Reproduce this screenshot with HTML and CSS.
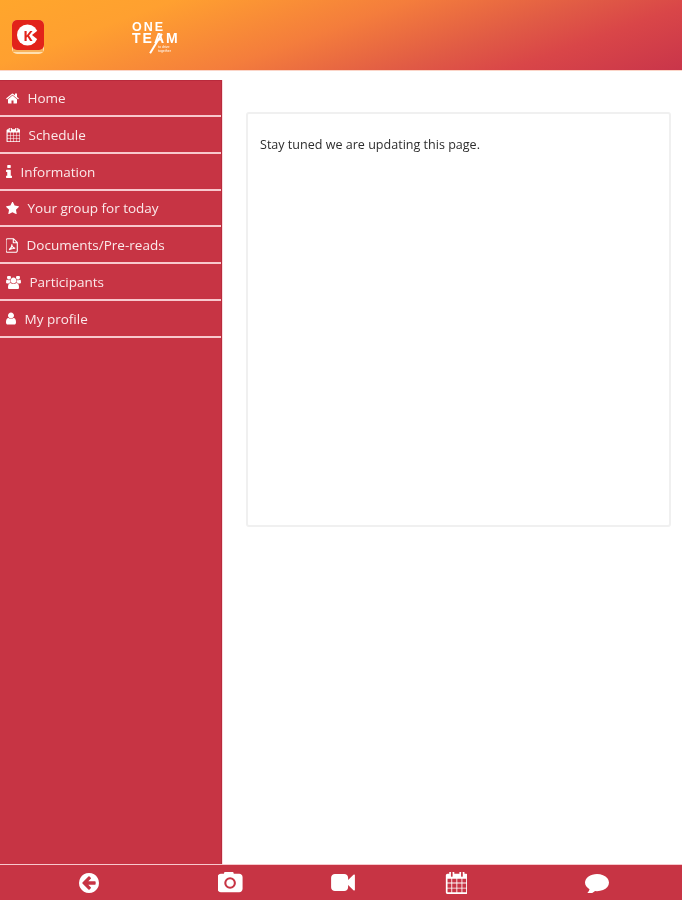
FILE: index.html
```html
<!DOCTYPE html>
<html lang="en">
<head>
<meta charset="utf-8">
<title>One Team</title>
<link rel="stylesheet" href="styles.css">
</head>
<body>
<div class="app">
  <header class="topbar">
    <svg class="brand-logo" viewBox="0 0 32 34" aria-hidden="true">
      <rect x="0" y="0" width="32" height="34" rx="5" fill="#ffe0b0"/>
      <rect x="1" y="25" width="30" height="7" fill="#f7b25a"/>
      <rect x="0" y="0" width="32" height="30" rx="5" fill="#e2231a"/>
      <circle cx="15.500" cy="15" r="10.500" fill="#fff"/>
      <path d="M20 15 L27.500 9 V21 Z" fill="#e2231a"/>
      <text x="16" y="20.500" class="brand-k">K</text>
    </svg>
    <div class="team-logo">
      <span class="team-one">ONE</span>
      <span class="team-team">TEAM</span>
      <i class="team-slash"></i>
      <span class="team-small">to drive<br>together</span>
    </div>
  </header>
  <div class="body-row">
    <nav class="sidebar">
      <a class="nav-item"><svg class="ico w13" viewBox="64 200 1664 1400"><path d="M1472 992v480q0 26-19 45t-45 19h-384v-384h-256v384h-384q-26 0-45-19t-19-45v-480q0-1 .5-3t.5-3l575-474 575 474q1 2 1 6zm223-69l-62 74q-8 9-21 11h-3q-13 0-21-7l-692-577-692 577q-12 8-24 7-13-2-21-11l-62-74q-8-10-7-23.500t11-21.500l719-599q32-26 76-26t76 26l244 204v-195q0-14 9-23t23-9h192q14 0 23 9t9 23v408l219 182q10 8 11 21.500t-7 23.500z"/></svg>Home</a>
      <a class="nav-item"><svg class="ico w14" viewBox="0 100 1664 1664"><path d="M192 1664h288v-288h-288v288zm352 0h320v-288h-320v288zm-352-352h288v-320h-288v320zm352 0h320v-320h-320v320zm-352-384h288v-288h-288v288zm736 736h320v-288h-320v288zm-384-736h320v-288h-320v288zm768 736h288v-288h-288v288zm-384-352h320v-320h-320v320zm-352-864v-288q0-13-9.500-22.500t-22.500-9.500h-64q-13 0-22.500 9.500t-9.500 22.500v288q0 13 9.500 22.500t22.500 9.500h64q13 0 22.500-9.500t9.500-22.500zm736 864h288v-320h-288v320zm-384-384h320v-288h-320v288zm384 0h288v-288h-288v288zm32-480v-288q0-13-9.500-22.500t-22.500-9.500h-64q-13 0-22.500 9.500t-9.500 22.500v288q0 13 9.500 22.500t22.500 9.500h64q13 0 22.500-9.500t9.500-22.500zm384-64v1280q0 52-38 90t-90 38h-1408q-52 0-90-38t-38-90v-1280q0-52 38-90t90-38h128v-96q0-66 47-113t113-47h64q66 0 113 47t47 113v96h384v-96q0-66 47-113t113-47h64q66 0 113 47t47 113v96h128q52 0 90 38t38 90z"/></svg>Schedule</a>
      <a class="nav-item"><svg class="ico w6" viewBox="576 128 640 1408"><path d="M1216 1344v128q0 26-19 45t-45 19h-512q-26 0-45-19t-19-45v-128q0-26 19-45t45-19h64v-384h-64q-26 0-45-19t-19-45v-128q0-26 19-45t45-19h384q26 0 45 19t19 45v576h64q26 0 45 19t19 45zm-128-1152v192q0 26-19 45t-45 19h-256q-26 0-45-19t-19-45v-192q0-26 19-45t45-19h256q26 0 45 19t19 45z"/></svg>Information</a>
      <a class="nav-item"><svg class="ico w13" viewBox="64 150 1664 1500"><path d="M1728 647q0 22-26 48l-363 354 86 500q1 7 1 20 0 21-10.500 35.500t-30.500 14.500q-19 0-40-12l-449-236-449 236q-22 12-40 12-21 0-31.500-14.500t-10.500-35.500q0-6 2-20l86-500-364-354q-25-27-25-48 0-37 56-46l502-73 225-455q19-41 49-41t49 41l225 455 502 73q56 9 56 46z"/></svg>Your group for today</a>
      <a class="nav-item"><svg class="ico w12" viewBox="0 0 12 15"><path class="ico-line" d="M1.500.7h6l3.800 3.800v8.300a1.500 1.500 0 0 1-1.500 1.500h-8.300a1.500 1.500 0 0 1-1.500-1.500v-10.600a1.500 1.500 0 0 1 1.500-1.500zM7.300.9v3.800h3.800M3 11.800c2-1.200 3-3.800 2.800-5.500 0 2 1.200 3.600 3.400 3.900-2.400 0-4.400.5-6.200 1.600z"/></svg>Documents/Pre-reads</a>
      <a class="nav-item"><svg class="ico w15" viewBox="0 128 1920 1536"><path d="M593 896q-162 5-265 128h-134q-82 0-138-40.500t-56-118.500q0-353 124-353 6 0 43.500 21t97.500 42.500 119 21.500q67 0 133-23-5 37-5 66 0 139 81 256zm1071 637q0 120-73 189.500t-194 69.500h-874q-121 0-194-69.500t-73-189.500q0-53 3.500-103.500t14-109 26.500-108.500 43-97.500 62-81 85.500-53.500 111.500-20q10 0 43 21.500t73 48 107 48 135 21.500 135-21.500 107-48 73-48 43-21.500q61 0 111.500 20t85.500 53.500 62 81 43 97.500 26.500 108.500 14 109 3.500 103.500zm-1024-1277q0 106-75 181t-181 75-181-75-75-181 75-181 181-75 181 75 75 181zm704 384q0 159-112.500 271.500t-271.500 112.500-271.500-112.500-112.500-271.500 112.500-271.500 271.500-112.500 271.500 112.500 112.500 271.500zm576 225q0 78-56 118.500t-138 40.500h-134q-103-123-265-128 81-117 81-256 0-29-5-66 66 23 133 23 59 0 119-21.500t97.500-42.500 43.500-21q124 0 124 353zm-128-609q0 106-75 181t-181 75-181-75-75-181 75-181 181-75 181 75 75 181z"/></svg>Participants</a>
      <a class="nav-item"><svg class="ico w10" viewBox="256 128 1280 1536"><path d="M1536 1399q0 109-62.500 187t-150.500 78h-854q-88 0-150.500-78t-62.500-187q0-85 8.500-160.500t31.500-152 58.500-131 94-89 134.500-34.500q131 128 313 128t313-128q76 0 134.500 34.500t94 89 58.500 131 31.500 152 8.500 160.500zm-256-887q0 159-112.500 271.500t-271.500 112.500-271.500-112.500-112.500-271.500 112.500-271.500 271.500-112.500 271.500 112.500 112.500 271.500z"/></svg>My profile</a>
    </nav>
    <main class="content">
      <section class="card">
        <p class="card-text">Stay tuned we are updating this page.</p>
      </section>
    </main>
  </div>
  <footer class="bottombar">
    <a class="tab"><svg class="tab-ico" viewBox="128 128 1536 1536"><path d="M1408 960v-128q0-26-18.500-45t-45.500-19h-502l189-189q19-19 19-45t-19-45l-91-91q-18-18-45-18t-45 18l-362 362-91 91q-18 18-18 45t18 45l91 91 362 362q18 18 45 18t45-18l91-91q18-18 18-45t-18-45l-189-189h502q26 0 45-19t19-45zm256-64q0 209-103 385.500t-279.500 279.500-385.500 103-385.500-103-279.500-279.500-103-385.500 103-385.500 279.500-279.500 385.500-103 385.500 103 279.500 279.500 103 385.500z"/></svg></a>
    <a class="tab"><svg class="tab-ico cam" viewBox="0 128 1920 1664"><path d="M928 672q119 0 203.500 84.500t84.500 203.500-84.500 203.500-203.500 84.500-203.500-84.500-84.500-203.500 84.500-203.500 203.500-84.500zm704-416q106 0 181 75t75 181v896q0 106-75 181t-181 75h-1408q-106 0-181-75t-75-181v-896q0-106 75-181t181-75h224l51-136q19-49 69.500-84.500t103.500-35.500h320q53 0 103.500 35.500t69.500 84.500l51 136h224zm-704 1152q185 0 316.500-131.500t131.500-316.500-131.500-316.500-316.500-131.500-316.500 131.500-131.500 316.500 131.500 316.500 316.500 131.500z"/></svg></a>
    <a class="tab"><svg class="tab-ico vid" viewBox="0 256 1792 1280"><path d="M1792 352v1088q0 42-39 59-13 5-25 5-27 0-45-19l-403-403v166q0 119-84.500 203.500t-203.500 84.500h-704q-119 0-203.500-84.500t-84.500-203.500v-704q0-119 84.500-203.500t203.500-84.500h704q119 0 203.500 84.500t84.500 203.500v165l403-402q18-19 45-19 12 0 25 5 39 17 39 59z"/></svg></a>
    <a class="tab"><svg class="tab-ico cal" viewBox="0 128 1664 1664"><path d="M192 1664h288v-288h-288v288zm352 0h320v-288h-320v288zm-352-352h288v-320h-288v320zm352 0h320v-320h-320v320zm-352-384h288v-288h-288v288zm736 736h320v-288h-320v288zm-384-736h320v-288h-320v288zm768 736h288v-288h-288v288zm-384-352h320v-320h-320v320zm-352-864v-288q0-13-9.500-22.500t-22.500-9.500h-64q-13 0-22.500 9.500t-9.500 22.500v288q0 13 9.500 22.500t22.500 9.500h64q13 0 22.500-9.500t9.500-22.500zm736 864h288v-320h-288v320zm-384-384h320v-288h-320v288zm384 0h288v-288h-288v288zm32-480v-288q0-13-9.500-22.500t-22.500-9.500h-64q-13 0-22.500 9.500t-9.500 22.500v288q0 13 9.500 22.500t22.500 9.500h64q13 0 22.500-9.500t9.500-22.500zm384-64v1280q0 52-38 90t-90 38h-1408q-52 0-90-38t-38-90v-1280q0-52 38-90t90-38h128v-96q0-66 47-113t113-47h64q66 0 113 47t47 113v96h384v-96q0-66 47-113t113-47h64q66 0 113 47t47 113v96h128q52 0 90 38t38 90z"/></svg></a>
    <a class="tab"><svg class="tab-ico msg" viewBox="0 192 1792 1472"><path d="M1792 896q0 174-120 321.500t-326 233-450 85.500q-70 0-145-8-198 175-460 242-49 14-114 22-17 2-30.500-9t-17.500-29v-1q-3-4-.5-12t2-10 4.500-9.500l6-9 7-8.500 8-9q7-8 31-34.500t34.500-38 31-39.500 32.500-51 27-59 26-76q-157-89-247.500-220t-90.500-281q0-130 71-248.500t191-204.500 286-136.500 348-50.500q244 0 450 85.500t326 233 120 321.500z"/></svg></a>
  </footer>
</div>
</body>
</html>
```

FILE: styles.css
```css
* { box-sizing: border-box; }
html, body { margin: 0; padding: 0; }
body { background: #fff; font-family: "Open Sans", "Liberation Sans", sans-serif; }

.app { width: 682px; height: 900px; display: flex; flex-direction: column; overflow: hidden; }

.topbar {
  height: 71px;
  flex: none;
  display: flex;
  align-items: flex-start;
  background: linear-gradient(160deg, #ffa62c 0%, #ffa030 20%, #f47d3c 47%, #e05a45 68%, #d94648 80%, #c9354a 100%);
  border-bottom: 1px solid #fbd5c8;
  padding: 20px 0 0 12px;
}
.brand-logo { width: 32px; height: 34px; flex: none; filter: blur(.4px); }
.brand-k { font: 700 14px "Open Sans", sans-serif; fill: #e2231a; text-anchor: middle; }

.team-logo {
  position: relative;
  margin: 1px 0 0 88px;
  width: 48px;
  height: 34px;
  color: #fff;
  font: 700 12.500px/12px "Liberation Sans", sans-serif;
  filter: blur(.4px);
}
.team-one, .team-team { display: block; white-space: nowrap; letter-spacing: 2px; }
.team-team { font-size: 14px; line-height: 11px; }
.team-slash {
  position: absolute;
  left: 23px;
  top: 11px;
  width: 2px;
  height: 23px;
  background: #fff;
  transform: rotate(31deg);
}
.team-small {
  position: absolute;
  left: 26px;
  top: 25px;
  font-size: 3.500px;
  line-height: 3.500px;
  font-weight: 400;
  white-space: nowrap;
}

.body-row { flex: 1; display: flex; min-height: 0; }

.sidebar {
  width: 222px;
  flex: none;
  margin-top: 9px;
  background: #c73444;
  border-top: 1px solid #b92a3c;
  border-right: 1px solid #b92a3c;
  box-shadow: 1px 0 0 #fbdcdf;
}
.nav-item {
  height: 36.850px;
  display: flex;
  align-items: center;
  gap: 8.500px;
  padding: 1px 0 0 6px;
  border-bottom: 2px solid #f8c8cd;
  color: #fbe9ea;
  font-size: 13.500px;
  filter: blur(.45px);
}
.nav-item:first-child { height: 35.850px; }
.ico { height: 13px; flex: none; fill: #fff; }
.w6 { width: 6px; }
.w10 { width: 10px; }
.w12 { width: 12px; height: 15px; }
.w13 { width: 13px; }
.w14 { width: 14px; height: 14px; }
.w15 { width: 15px; }
.ico-line { fill: none; stroke: #fff; stroke-width: 1.100; }

.content { flex: 1; min-width: 0; padding: 41px 11px 0 24px; }
.card {
  height: 415px;
  background: #fff;
  border: 2px solid #f0f0f0;
  border-radius: 3px;
  padding: 22px 12px;
}
.card-text {
  margin: 0;
  color: #2d2d2d;
  font-size: 12.550px;
  line-height: 17px;
  filter: blur(.45px);
}

.bottombar {
  height: 35px;
  flex: none;
  display: grid;
  grid-template-columns: 178px 104px 122px 104px 174px;
  align-items: center;
  background: #c73444;
  box-shadow: 0 -1px 0 #f8c8cd;
}
.tab { display: flex; justify-content: center; align-items: center; }
.tab-ico { width: 20px; height: 20px; fill: #fff; filter: blur(.45px); }
.cam { width: 25px; height: 22px; }
.vid { width: 24px; height: 17px; }
.cal { width: 22px; height: 22px; }
.msg { width: 24px; height: 20px; margin-left: 3px; }
```
